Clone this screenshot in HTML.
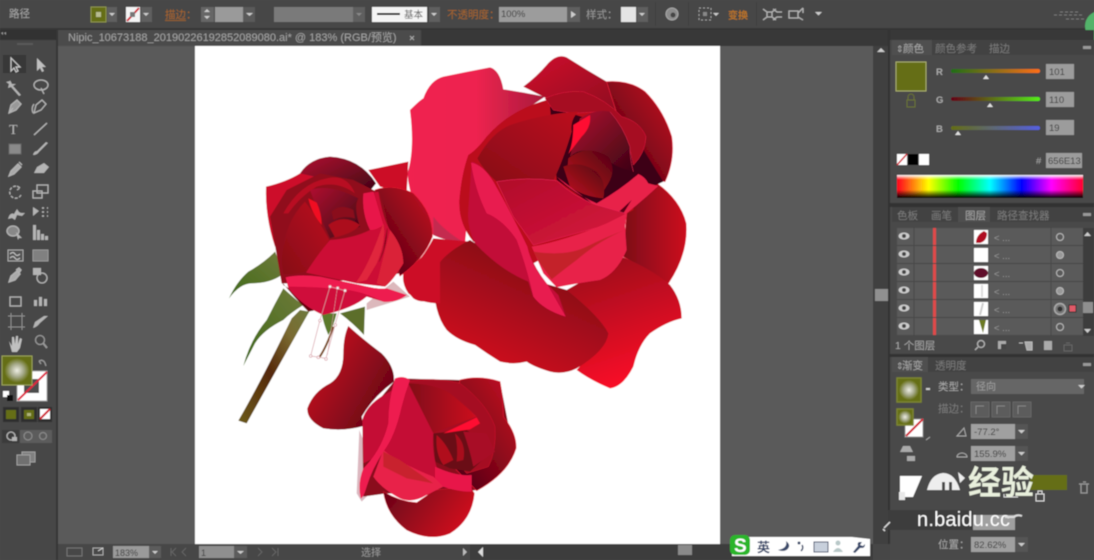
<!DOCTYPE html>
<html lang="zh">
<head>
<meta charset="utf-8">
<title>Illustrator</title>
<style>
html,body{margin:0;padding:0;background:#4a4a4a;width:1094px;height:560px;overflow:hidden}
svg{display:block;position:absolute;left:0;top:0}
text{font-family:"Liberation Sans","Noto Sans CJK SC",sans-serif}
.u{fill:#a8a8a8;font-size:10.5px}
.o{fill:#a9652a;font-size:10.5px}
.d{fill:#7c7c7c;font-size:10.5px}
.n{fill:#3a3a3a;font-size:9.5px}
.i{fill:none;stroke:#b4b4b4;stroke-width:1.3}
.f{fill:#b4b4b4}
</style>
</head>
<body>
<svg width="1094" height="560" viewBox="0 0 1094 560" xmlns="http://www.w3.org/2000/svg">
<defs>
<filter id="b" x="0" y="0" width="100%" height="100%"><feGaussianBlur stdDeviation="0.6"/></filter>
<linearGradient id="g1" x1="0" y1="0" x2="1" y2="1"><stop offset="0" stop-color="#d00c2c"/><stop offset="1" stop-color="#8a0a20"/></linearGradient>
<linearGradient id="g2" x1="1" y1="0" x2="0" y2="1"><stop offset="0" stop-color="#c80c24"/><stop offset=".6" stop-color="#7a0618"/><stop offset="1" stop-color="#3e0414"/></linearGradient>
<linearGradient id="g3" x1="0" y1="0" x2="1" y2="0"><stop offset="0" stop-color="#7c0818"/><stop offset="1" stop-color="#cc1020"/></linearGradient>
<linearGradient id="g4" x1=".3" y1="0" x2=".6" y2="1"><stop offset="0" stop-color="#9c0a1c"/><stop offset="1" stop-color="#ff1028"/></linearGradient>
<linearGradient id="g5" x1="0" y1="0" x2="1" y2="0"><stop offset="0" stop-color="#f0244f"/><stop offset=".5" stop-color="#ee234f"/><stop offset="1" stop-color="#a81c3c"/></linearGradient>
<linearGradient id="g6" x1=".8" y1="0" x2=".2" y2="1"><stop offset="0" stop-color="#720616"/><stop offset="1" stop-color="#d8101f"/></linearGradient>
<linearGradient id="g7" x1="1" y1="0" x2="0" y2="1"><stop offset="0" stop-color="#bc0e1e"/><stop offset="1" stop-color="#860818"/></linearGradient>
<linearGradient id="g8" x1="0" y1="0" x2="1" y2="1"><stop offset="0" stop-color="#b01030"/><stop offset="1" stop-color="#3c0414"/></linearGradient>
<linearGradient id="g9" x1="0" y1="0" x2="1" y2="1"><stop offset="0" stop-color="#b00a2a"/><stop offset="1" stop-color="#d8183e"/></linearGradient>
<linearGradient id="g10" x1="0" y1="0" x2="1" y2=".7"><stop offset="0" stop-color="#dc0f25"/><stop offset="1" stop-color="#640516"/></linearGradient>
<linearGradient id="g11" x1="0" y1="0" x2="1" y2=".4"><stop offset="0" stop-color="#640418"/><stop offset="1" stop-color="#cc1020"/></linearGradient>
<linearGradient id="g12" x1="1" y1="0" x2="0" y2="1"><stop offset="0" stop-color="#500514"/><stop offset="1" stop-color="#c80c1e"/></linearGradient>
<linearGradient id="st" x1="1" y1="0" x2="0" y2="1"><stop offset="0" stop-color="#6e7a3e"/><stop offset=".25" stop-color="#7a6a30"/><stop offset=".55" stop-color="#55280a"/><stop offset="1" stop-color="#6b5a1a"/></linearGradient>
<linearGradient id="lf" x1="1" y1="0" x2="0" y2="1"><stop offset="0" stop-color="#6f7a3a"/><stop offset="1" stop-color="#3f6a18"/></linearGradient>
<radialGradient id="rg"><stop offset="0" stop-color="#eeeee4"/><stop offset=".45" stop-color="#a5a98a"/><stop offset=".85" stop-color="#656e13"/><stop offset="1" stop-color="#656e13"/></radialGradient>
<linearGradient id="spec" x1="0" y1="0" x2="1" y2="0"><stop offset="0" stop-color="#ff0020"/><stop offset=".17" stop-color="#ffff00"/><stop offset=".33" stop-color="#00ff00"/><stop offset=".5" stop-color="#00ffff"/><stop offset=".67" stop-color="#0000ff"/><stop offset=".83" stop-color="#ff00ff"/><stop offset="1" stop-color="#ff0030"/></linearGradient>
<linearGradient id="wb" x1="0" y1="0" x2="0" y2="1"><stop offset="0" stop-color="#fff"/><stop offset=".2" stop-color="#fff" stop-opacity="0"/><stop offset=".65" stop-color="#000" stop-opacity="0"/><stop offset="1" stop-color="#000"/></linearGradient>
<linearGradient id="sR" x1="0" y1="0" x2="1" y2="0"><stop offset="0" stop-color="#1f6e13"/><stop offset="1" stop-color="#ff6e13"/></linearGradient>
<linearGradient id="sG" x1="0" y1="0" x2="1" y2="0"><stop offset="0" stop-color="#650013"/><stop offset="1" stop-color="#55ee13"/></linearGradient>
<linearGradient id="sB" x1="0" y1="0" x2="1" y2="0"><stop offset="0" stop-color="#656e13"/><stop offset="1" stop-color="#5560e0"/></linearGradient>
</defs>

<g filter="url(#b)">
<!-- backgrounds -->
<rect width="1094" height="560" fill="#4a4a4a"/>
<rect x="58" y="46" width="832" height="498" fill="#5a5a5a"/>
<rect x="0" y="0" width="1094" height="28" fill="#474747"/>
<rect x="0" y="28" width="1094" height="2" fill="#363636"/>
<rect x="0" y="30" width="890" height="16" fill="#373737"/>
<rect x="58" y="30" width="363" height="16" fill="#4b4b4b"/>
<rect x="0" y="30" width="56" height="10" fill="#333"/>
<rect x="0" y="40" width="56" height="520" fill="#464646"/>
<rect x="56" y="30" width="2" height="530" fill="#363636"/>
<rect x="195" y="46" width="525" height="498" fill="#fff"/>

<!-- top bar -->
<text x="9" y="17" class="u">路径</text>
<rect x="91" y="7" width="15" height="15" fill="#656e13" stroke="#8f9550"/>
<rect x="96" y="12" width="5" height="5" fill="#b8bc90"/>
<rect x="107" y="7" width="10" height="15" fill="#5e5e5e"/><path d="M109 13h6l-3 3z" fill="#ccc"/>
<rect x="126" y="7" width="14" height="15" fill="#f4f4f4"/><path d="M127 21L139 8" stroke="#d02030" stroke-width="2"/><rect x="130" y="12" width="5" height="5" fill="#777"/>
<rect x="141" y="7" width="11" height="15" fill="#5e5e5e"/><path d="M143 13h6l-3 3z" fill="#ccc"/>
<text x="165" y="18" class="o">描边：</text><rect x="165" y="20" width="21" height="1" fill="#96602a"/>
<rect x="201" y="7" width="13" height="15" fill="#666"/><path d="M204 12l3-3 3 3zM204 16l3 3 3-3z" fill="#ccc"/>
<rect x="215" y="7" width="28" height="15" fill="#9a9a9a"/>
<rect x="243" y="7" width="12" height="15" fill="#5a5a5a"/><path d="M246 13h7l-3.500 3z" fill="#ccc"/>
<rect x="274" y="7" width="79" height="15" fill="#7a7a7a"/>
<rect x="353" y="7" width="12" height="15" fill="#5e5e5e"/><path d="M356 13h6l-3 3z" fill="#888"/>
<rect x="372" y="7" width="55" height="15" fill="#f4f4f4"/><rect x="377" y="13" width="23" height="2" fill="#111"/><text x="404" y="18" class="n" style="fill:#555">基本</text>
<rect x="429" y="7" width="11" height="15" fill="#5e5e5e"/><path d="M431 13h6l-3 3z" fill="#ccc"/>
<text x="447" y="18" class="o">不透明度：</text>
<rect x="499" y="7" width="68" height="15" fill="#9c9c9c"/><text x="501" y="17" class="n">100%</text>
<rect x="567" y="7" width="13" height="15" fill="#5e5e5e"/><path d="M571 11l5 3.500-5 3.500z" fill="#ccc"/>
<text x="586" y="18" class="d" style="fill:#999">样式：</text>
<rect x="621" y="7" width="15" height="15" fill="#e4e4e4"/>
<rect x="637" y="7" width="11" height="15" fill="#5e5e5e"/><path d="M639 13h6l-3 3z" fill="#ccc"/>
<rect x="655" y="2" width="1" height="24" fill="#3e3e3e"/>
<circle cx="672" cy="14" r="6" fill="#8c8c8c" stroke="#aaa"/><circle cx="673" cy="15" r="2.500" fill="#444"/>
<rect x="688" y="2" width="1" height="24" fill="#3e3e3e"/>
<rect x="699" y="8" width="12" height="12" fill="none" stroke="#a0a0a0" stroke-dasharray="2 2"/><rect x="703" y="12" width="4" height="4" fill="#888"/><path d="M713 13h6l-3 3z" fill="#ccc"/>
<text x="738" y="19" text-anchor="middle" class="o" style="font-size:10px;fill:#b87228;font-weight:bold">变换</text>
<rect x="756" y="2" width="1" height="24" fill="#3e3e3e"/>
<path d="M773 9l4 3h5M773 20l4-3h5M763 9l4 3h5l4-3M763 20l4-3h5l4 3M767 12v5M772 12v5" class="i"/>
<path d="M789 11h9v7h-9zM798 13l5-5M803 8v5M798 17l5 3" class="i"/><path d="M815 12h7l-3.500 3.500z" fill="#ccc"/>
<path d="M1054 15h30M1060 12h20M1066 19h18" stroke="#8a8a8a" stroke-dasharray="3 2" stroke-width=".8"/>
<circle cx="1100" cy="26" r="15" fill="#52b36a"/>

<!-- tab -->
<text x="68" y="41" style="fill:#a4a4a4;font-size:11px">Nipic_10673188_20190226192852089080.ai* @ 183% (RGB/预览)</text>
<path d="M410 36l4 4M414 36l-4 4" stroke="#aaa"/>
<path d="M1 33l2-1v3zM4 33l2-1v3z" fill="#999"/>
<rect x="17" y="43" width="16" height="2" fill="#5a5a5a"/>

<!-- left tools -->
<rect x="3" y="55" width="23" height="18" fill="#383838"/>
<path d="M11 58l0 13 3-3 2 4 2-1-2-4 4 0z" fill="none" stroke="#c8c8c8" stroke-width="1.200"/>
<path d="M37 58v13l3-3 2 4 2-1-2-4h4z" fill="#c0c0c0"/>
<path d="M10 80l2 4 4 0-3 2 8 9-2 1-8-9-3 1 1-4-3-2 4-1z" class="f"/>
<path d="M34 85a7 5 0 1 1 14 0a7 5 0 1 1-14 0M41 88l3 6" class="i"/>
<path d="M9 113l2-8 6-5 4 4-5 6zM13 108l-4 5" class="i" style="fill:#999"/>
<path d="M34 113l2-8 6-5 4 4-5 6zM34 104q-3 4 -1 9" class="i"/>
<text x="9" y="134" style="fill:#b8b8b8;font-size:14px;font-family:'Liberation Serif',serif">T</text>
<path d="M34 135l13-12" stroke="#b4b4b4" stroke-width="1.400"/>
<rect x="9" y="144" width="12" height="10" fill="#8a8a8a" stroke="#666"/>
<path d="M33 155q4 0 6-3l9-9-2-1-9 9q-3 0-4 4z" class="f"/>
<path d="M9 176l2-5 7-7 3 3-7 7zM19 162l3 3" class="i" style="fill:#aaa"/>
<path d="M34 173l3-6 7-4 5 4-5 6z" class="f"/>
<path d="M20 188a6 6 0 1 0 1 7M17 186l3 2-3 2" class="i" stroke-dasharray="3 1.500"/>
<rect x="37" y="185" width="11" height="8" class="i"/><rect x="33" y="191" width="9" height="7" class="i"/>
<path d="M8 219q2-7 6-5l3-5 2 3 2 1 4 0-3 3-5-1-2 5-3-2z" class="f"/>
<path d="M33 207l6 4-6 5z" class="f"/><path d="M42 208h2M47 208h1M42 212h2M47 212h1M42 216h2M47 216h1" stroke="#bbb" stroke-width="1.500"/>
<ellipse cx="13" cy="231" rx="6" ry="5" class="i" style="fill:#888"/><path d="M16 232l6 6-3 0-1 2z" class="f"/>
<path d="M33 225h3v15h-3zM37 230h3v10h-3zM41 234h3v6h-3zM45 236h3v4h-3z" class="f"/>
<rect x="8" y="250" width="15" height="11" fill="#555" stroke="#aaa"/><path d="M10 254q3-3 5 0t5 0M10 258q3-3 5 0t5 0" stroke="#ccc" fill="none"/>
<rect x="33" y="250" width="15" height="11" fill="#808080" stroke="#999"/>
<path d="M9 282l2-6 6-5 3 3-5 6zM16 270l3-2 2 2-2 3" class="i" style="fill:#aaa"/>
<rect x="33" y="268" width="8" height="7" class="f"/><circle cx="42" cy="278" r="5" class="i"/>
<rect x="10" y="297" width="11" height="9" class="i"/>
<path d="M34 306v-6h3v6zM39 306v-9h3v9zM44 306v-7h3v7z" class="f"/>
<path d="M11 316h11v11h-11zM8 316h17M8 327h17M11 313v17M22 313v17" stroke="#8e8e8e" fill="none"/>
<path d="M33 328q4-1 7-5l8-7-4 0-9 6z" class="f"/>
<path d="M9 341l3 5 0-9 2 0 1 7 1-8 2 0 0 8 2-6 2 1-2 9-3 4h-5z" fill="#c0c0c0"/>
<circle cx="40" cy="340" r="4.500" class="i" style="stroke:#999"/><path d="M43 343l4 5" stroke="#999" stroke-width="2"/>

<rect x="17" y="371" width="30" height="30" fill="#fff" stroke="#999"/>
<rect x="24" y="379" width="15" height="14" fill="#4d4d4d"/>
<path d="M18 400L47 372" stroke="#e02840" stroke-width="2"/>
<rect x="2" y="356" width="30" height="29" fill="url(#rg)" stroke="#9ca45a"/>
<path d="M39 361q4-2 6 2l1 3M39 361l3-1M39 361l2 3" class="i" style="stroke:#999"/>
<rect x="3" y="391" width="6" height="6" fill="#fff"/><rect x="7" y="395" width="6" height="6" fill="#111"/>
<rect x="3" y="407" width="16" height="15" fill="#2e2e2e"/><rect x="6" y="410" width="10" height="9" fill="#656e13"/>
<rect x="21" y="407" width="16" height="15" fill="#2e2e2e"/><rect x="24" y="410" width="10" height="9" fill="#656e13"/><rect x="27" y="413" width="4" height="3" fill="#b0b47a"/>
<rect x="38" y="407" width="14" height="15" fill="#2e2e2e"/><rect x="40" y="409" width="10" height="10" fill="#fff"/><path d="M40 419l10-10" stroke="#d02030" stroke-width="2"/>
<rect x="2" y="430" width="17" height="13" fill="#3a3a3a"/><rect x="20" y="430" width="32" height="13" fill="#5c5c5c"/>
<circle cx="11" cy="436" r="4" class="i"/><rect x="12" y="437" width="5" height="4" class="f"/>
<circle cx="28" cy="436" r="4" class="i" style="stroke:#888"/><circle cx="43" cy="436" r="3.500" class="i" style="stroke:#888"/>
<rect x="22" y="452" width="13" height="10" fill="#808080" stroke="#a0a0a0"/><rect x="17" y="455" width="13" height="10" fill="#707070" stroke="#a0a0a0"/>

<!-- big rose -->
<g transform="translate(400 50) scale(.33333)">
<path d="M370 110Q410 80 440 45Q470 10 500 22Q560 60 620 95Q650 130 665 195L560 200L440 145Z" fill="url(#g1)"/>
<path d="M620 95Q690 90 735 125Q790 180 815 260Q825 330 795 395L700 370L650 190Z" fill="url(#g2)" stroke="#e8203c" stroke-width="2"/>
<path d="M770 400Q840 450 858 520Q865 610 805 700L670 620L680 490Z" fill="url(#g3)" stroke="#e01a30" stroke-width="2"/>
<path d="M500 720L670 622Q760 660 810 705Q845 750 845 805Q800 815 750 850Q715 885 700 950Q670 1010 630 1015Q570 990 530 960L600 880Z" fill="url(#g4)"/>
<path d="M30 180Q60 150 70 145Q90 90 130 80Q200 65 270 52Q300 60 310 118Q360 125 435 140L330 210L220 320L195 580Q130 570 100 555Q30 470 22 370Q45 300 30 180Z" fill="url(#g5)"/>
<path d="M100 500Q130 540 195 580Q130 570 100 555Z" fill="#c42a50"/>
<path d="M10 680Q60 640 100 565L210 575L100 750Q60 760 40 745Q15 720 10 680Z" fill="#cc0f28"/>
<path d="M100 680Q110 620 210 570L400 690L500 720Q600 800 625 850Q620 900 530 955Q490 975 450 965Q400 950 380 935Q340 945 300 935Q260 910 225 885Q170 870 140 840Q100 790 100 680Z" fill="url(#g6)"/>
<path d="M205 315Q230 300 260 260Q330 180 440 150L560 170L700 350L700 480L400 640L220 575Q175 520 178 450Q185 370 205 315Z" fill="#bb0a1a"/>
<path d="M450 170L700 250L790 395L600 480L470 390Z" fill="#3e0514"/>
<path d="M435 145Q490 120 550 125Q620 150 665 200Q720 215 738 260Q735 310 700 345Q690 280 660 230Q640 195 600 185L520 190L460 180Z" fill="#a60a20" stroke="#e02040" stroke-width="1.500"/>
<path d="M540 205Q590 175 630 185Q670 230 690 290Q690 330 700 365Q640 350 590 310Q540 290 510 320Z" fill="url(#g8)"/>
<path d="M630 185Q670 230 690 290Q690 330 700 365" fill="none" stroke="#e02a50" stroke-width="1.500"/>
<path d="M505 325Q560 280 625 320Q650 360 625 400L600 440L500 380Z" fill="url(#g12)"/>
<path d="M490 350Q540 330 590 365Q620 395 610 445Q550 440 510 410Z" fill="url(#g12)"/>
<path d="M232 325Q280 240 340 222Q440 190 535 185Q510 210 515 245Q490 330 460 392Q380 380 290 395Q250 360 232 325Z" fill="url(#g7)"/>
<path d="M570 195Q575 230 545 260L505 312Q520 280 520 225Z" fill="#ff1030"/>
<path d="M470 380Q520 430 590 460Q660 420 715 372Q735 380 745 400L775 408Q730 450 680 490L640 515L590 470Z" fill="#e8204a"/>
<path d="M630 510L695 450L670 490Z" fill="#5a0514"/>
<path d="M290 395Q380 380 470 392Q520 440 590 465L650 482L680 492Q640 510 620 525L400 585Q370 540 340 500Z" fill="url(#g9)" stroke="#f0285a" stroke-width="1.500"/>
<path d="M395 590Q500 570 620 520L680 490L675 530L680 600Q650 670 600 690Q530 700 470 712L430 670Z" fill="#e8234a"/>
<path d="M400 605Q500 620 560 590Q620 560 675 540Q600 570 530 630Q490 660 455 688L420 640Z" fill="#c4202c"/>
<path d="M205 480L215 335Q250 345 280 395Q340 500 380 590Q400 650 440 700L475 735L497 800Q430 780 400 740L385 695Q300 660 225 580Q200 530 205 480Z" fill="#c20838"/>
<path d="M213 338Q250 345 280 395Q340 500 382 590Q395 650 440 700L497 800Q430 780 400 740Q380 650 350 570Q310 510 260 490Q225 420 213 338Z" fill="#e81a50"/>
</g>

<!-- small rose and stem -->
<g transform="translate(220 150) scale(.33333)">
<path d="M215 505L240 480L268 485Q225 560 80 820L55 812Q120 700 215 505Z" fill="url(#st)"/>
<path d="M190 415Q240 460 250 465Q210 490 190 510Q130 540 105 580L70 648Q90 570 140 510Q165 460 190 415Z" fill="url(#lf)"/>
<path d="M165 305Q185 350 185 375Q150 400 95 400Q60 400 27 445Q50 395 85 365Q130 340 165 305Z" fill="url(#lf)"/>
<path d="M360 490L435 470L432 555Q400 520 360 490Z" fill="#5c6e2c"/>
<path d="M305 490L350 490Q340 530 325 555Q310 520 305 490Z" fill="#5c7a2c"/>
<path d="M445 60L565 35L560 130L480 110Z" fill="#cc1025"/>
<path d="M520 395L570 440L440 480L440 460Z" fill="#dcb8bc"/>
<path d="M550 370L640 290L660 300L660 460Q600 460 565 430Q545 400 550 370Z" fill="#cc0f28"/>
<path d="M138 110Q200 95 240 70Q300 65 330 90Q250 100 200 170Q175 240 165 290Q135 200 138 110Z" fill="#cd0f2c"/>
<path d="M240 70Q270 25 330 20Q420 25 468 100L440 135L330 90Z" fill="url(#g8)"/>
<path d="M465 120Q520 100 580 130Q640 190 637 260Q610 330 540 378L480 220Z" fill="url(#g2)" stroke="#e01a30" stroke-width="2"/>
<path d="M150 200L200 120L300 70L400 90L480 130L540 370L300 400L185 400Z" fill="#900a1c"/>
<path d="M190 190Q240 100 320 85Q380 70 405 130Q350 90 290 110Q240 140 205 190Z" fill="#b80c22"/>
<path d="M270 120Q330 100 415 145Q400 170 420 230L330 265L300 200Z" fill="url(#g8)"/>
<path d="M335 185Q360 160 400 180L405 205Q370 195 340 210Z" fill="#8a0a1a"/>
<path d="M325 225Q370 190 420 225Q400 250 345 262Z" fill="#ac0a1c"/>
<path d="M185 335Q190 220 255 155Q290 200 328 270Q290 320 260 365Q220 375 190 372Z" fill="url(#g7)"/>
<path d="M265 145L290 158Q305 190 305 225Q275 190 265 145Z" fill="#f01020"/>
<path d="M258 368Q295 310 330 270Q400 265 450 240Q460 200 440 130L475 125Q490 210 510 240Q550 290 550 340Q520 390 495 410L410 400Z" fill="#cc1035"/>
<path d="M430 130L460 125L490 225Q470 240 450 240Q425 190 430 130Z" fill="#e81848"/>
<path d="M408 398Q450 340 490 220Q500 270 470 340L440 390Z" fill="#e0283c"/>
<path d="M470 400Q500 280 510 240Q550 290 550 340Q520 390 495 410Z" fill="#da2038"/>
<path d="M502 235L490 300L478 335Q500 290 502 235Z" fill="#7a0615" stroke="#7a0615"/>
<path d="M190 405Q250 440 290 480L265 485Q220 440 185 395Z" fill="#6a0410"/>
<path d="M197 382Q240 372 300 380Q370 395 420 405Q480 420 500 415L560 435Q530 458 490 455L440 440Q400 475 310 495Q250 470 205 415Z" fill="#cf0a3a"/>
<path d="M197 382Q240 372 300 380Q370 395 420 405Q480 420 500 415L560 435Q530 458 490 455Q430 425 380 420Q300 410 205 410Z" fill="#ee1a50"/>
<path d="M340 530Q320 590 298 622" stroke="#7a4a1a" stroke-width="6" fill="none"/>
<path d="M330 410L375 422L345 525L318 625L272 618L300 510Z" fill="none" stroke="#d9a0a8" stroke-width="2"/>
<path d="M352 414L322 615" fill="none" stroke="#d9a0a8" stroke-width="1.500"/>
<g fill="#fff" stroke="#d9a0a8" stroke-width="2"><circle cx="330" cy="410" r="4"/><circle cx="353" cy="414" r="4"/><circle cx="375" cy="422" r="4"/><circle cx="272" cy="618" r="4"/><circle cx="295" cy="622" r="4"/><circle cx="318" cy="627" r="4"/><circle cx="300" cy="512" r="4"/><circle cx="346" cy="525" r="4"/></g>
</g>

<!-- third rose -->
<g transform="translate(300 320) scale(.33333)">
<path d="M178 330L170 520L185 545L240 490Z" fill="#dcb8c0"/>
<path d="M145 18Q185 55 245 100Q285 140 282 185Q220 230 185 290L190 318Q130 335 70 325Q20 300 22 265Q40 215 90 190Q130 165 130 100Q130 50 145 18Z" fill="url(#g10)"/>
<path d="M187 300L290 175L480 180L600 185L640 390L530 510L400 525L260 520L190 530Z" fill="#8a0a1c"/>
<path d="M480 180Q540 165 600 185Q610 240 610 290Q650 340 648 385Q625 460 530 512L440 420Z" fill="url(#g2)" stroke="#e01a30" stroke-width="2"/>
<path d="M250 515Q300 545 350 548L405 510L510 500L523 520Q515 600 450 640Q390 665 320 630Q260 585 250 515Z" fill="url(#g11)" stroke="#e01a30" stroke-width="1.500"/>
<path d="M320 185Q400 170 480 190Q560 250 585 320Q590 390 565 440L500 460L400 340Z" fill="#a50c20" stroke="#d01a30" stroke-width="1.500"/>
<path d="M400 340L500 330L580 390L510 455L450 445L405 425Z" fill="#6a0818"/>
<path d="M410 345Q440 370 460 420L430 435Q405 400 410 345Z" fill="#b00c1e"/>
<path d="M465 340Q500 370 490 420L470 425Q475 380 465 340Z" fill="#a80c1e"/>
<path d="M490 335L560 340L585 395L520 440Q510 390 490 335Z" fill="#a81028"/>
<path d="M320 190Q400 190 450 220Q500 260 530 290Q450 320 395 340Q350 290 315 240Z" fill="url(#g3)"/>
<path d="M530 292L540 310L510 328Q460 335 430 340Z" fill="#ff1030"/>
<path d="M187 300Q200 250 270 215L325 190L400 340Q395 410 420 470L400 490L250 400L190 430Z" fill="#c40c34"/>
<path d="M405 440Q470 470 515 465L515 515Q460 515 405 490Z" fill="#e81848"/>
<path d="M250 390Q300 430 400 470L430 500L380 525Q330 555 290 530Q240 500 220 470Z" fill="#e8234a"/>
<path d="M250 395L300 420L400 490L320 475Q270 450 250 440Z" fill="#c8202e"/>
<path d="M285 175Q310 165 330 180Q315 220 305 260Q285 350 250 395Q215 450 200 500Q190 535 182 535Q172 490 190 445Q245 390 265 310Q265 240 285 175Z" fill="#ee1a50"/>
</g>

<!-- color panel -->
<rect x="890" y="30" width="204" height="530" fill="#4a4a4a"/>
<rect x="888" y="30" width="2" height="530" fill="#333"/>
<rect x="890" y="30" width="204" height="10" fill="#393939"/>
<rect x="892" y="40" width="202" height="15" fill="#424242"/>
<rect x="892" y="40" width="40" height="15" fill="#4f4f4f"/>
<text x="896" y="52" style="fill:#aaa;font-size:9px">⇕</text>
<text x="903" y="52" class="u">颜色</text><text x="935" y="52" class="d">颜色参考</text><text x="989" y="52" class="d">描边</text>
<rect x="1083" y="46" width="8" height="3" fill="#999"/>
<rect x="896" y="62" width="30" height="29" fill="#656e13" stroke="#a9ad70"/>
<rect x="907" y="100" width="8" height="7" fill="none" stroke="#6b7330"/><path d="M908 100v-3a3 3 0 0 1 6 0v3" fill="none" stroke="#6b7330"/>
<text x="936" y="75" class="u" style="font-size:9.500px;font-weight:bold">R</text><text x="936" y="103" class="u" style="font-size:9.500px;font-weight:bold">G</text><text x="936" y="132" class="u" style="font-size:9.500px;font-weight:bold">B</text>
<rect x="951" y="69" width="89" height="4" rx="2" fill="url(#sR)"/><rect x="951" y="97" width="89" height="4" rx="2" fill="url(#sG)"/><rect x="951" y="126" width="89" height="4" rx="2" fill="url(#sB)"/>
<path d="M983 79l3-4 3 4z" fill="#e0e0e0"/><path d="M987 107l3-4 3 4z" fill="#e0e0e0"/><path d="M955 135l3-4 3 4z" fill="#e0e0e0"/>
<rect x="1046" y="64" width="28" height="15" fill="#9c9c9c"/><text x="1049" y="75" class="n">101</text>
<rect x="1046" y="92" width="28" height="15" fill="#9c9c9c"/><text x="1049" y="103" class="n">110</text>
<rect x="1046" y="120" width="28" height="15" fill="#9c9c9c"/><text x="1049" y="131" class="n">19</text>
<rect x="897" y="154" width="10" height="11" fill="#fff"/><path d="M897 165l10-11" stroke="#d02030" stroke-width="1.500"/>
<rect x="908" y="154" width="10" height="11" fill="#000"/><rect x="919" y="154" width="10" height="11" fill="#fff"/>
<text x="1036" y="164" class="u" style="font-size:9.500px">#</text>
<rect x="1046" y="153" width="36" height="15" fill="#9c9c9c"/><text x="1048" y="164" class="n">656E13</text>
<rect x="897" y="175" width="186" height="23" fill="url(#spec)"/><rect x="897" y="175" width="186" height="23" fill="url(#wb)"/>

<!-- layers panel -->
<rect x="890" y="203" width="204" height="4" fill="#333"/>
<rect x="892" y="207" width="202" height="15" fill="#424242"/>
<rect x="958" y="207" width="32" height="15" fill="#505050"/>
<text x="897" y="219" class="d">色板</text><text x="931" y="219" class="d">画笔</text><text x="965" y="219" class="u">图层</text><text x="997" y="219" class="d">路径查找器</text>
<rect x="1083" y="213" width="8" height="3" fill="#999"/>
<rect x="1083" y="228" width="11" height="108" fill="#3c3c3c"/>
<path d="M1084 236l3.500-4 3.500 4z" fill="#ccc"/>
<path d="M1084 329l3.500 4 3.500-4z" fill="#ccc"/>
<rect x="1083" y="302" width="10" height="11" fill="#8f8f8f"/>
<g fill="#5a5a5a">
<rect x="897" y="228" width="186" height="17"/><rect x="897" y="246" width="186" height="17"/><rect x="897" y="264" width="186" height="17"/><rect x="897" y="282" width="186" height="17"/><rect x="897" y="300" width="186" height="17"/><rect x="897" y="318" width="186" height="17"/>
</g>
<path d="M914 228v107M1051 228v107" stroke="#464646"/>
<rect x="933" y="228" width="3" height="107" fill="#e04848"/>
<path d="M897 245.500h186M897 263.500h186M897 281.500h186M897 299.500h186M897 317.500h186" stroke="#464646"/>
<g fill="#ccc"><ellipse cx="904" cy="236" rx="5.500" ry="3.500"/><ellipse cx="904" cy="254" rx="5.500" ry="3.500"/><ellipse cx="904" cy="272" rx="5.500" ry="3.500"/><ellipse cx="904" cy="290" rx="5.500" ry="3.500"/><ellipse cx="904" cy="308" rx="5.500" ry="3.500"/><ellipse cx="904" cy="326" rx="5.500" ry="3.500"/></g>
<g fill="#444"><circle cx="904" cy="236" r="2"/><circle cx="904" cy="254" r="2"/><circle cx="904" cy="272" r="2"/><circle cx="904" cy="290" r="2"/><circle cx="904" cy="308" r="2"/><circle cx="904" cy="326" r="2"/></g>
<g fill="#fff"><rect x="974" y="230" width="14" height="14"/><rect x="974" y="248" width="14" height="14"/><rect x="974" y="266" width="14" height="14"/><rect x="974" y="284" width="14" height="14"/><rect x="974" y="302" width="14" height="14"/><rect x="974" y="320" width="14" height="14"/></g>
<path d="M976 243q0-8 8-12l3 2q0 8-7 10z" fill="#b00c20"/>
<ellipse cx="981" cy="273" rx="7" ry="5" fill="#60082a"/>
<path d="M982 285v12" stroke="#ddd" stroke-width="2"/><path d="M983 303l-3 12" stroke="#ccc" stroke-width="2"/>
<path d="M979 320h7l-3 13z" fill="#6c7a20"/>
<text x="994" y="241" style="fill:#989898;font-size:9.500px">&lt; ...</text><text x="994" y="259" style="fill:#989898;font-size:9.500px">&lt; ...</text><text x="994" y="277" style="fill:#989898;font-size:9.500px">&lt; ...</text><text x="994" y="295" style="fill:#989898;font-size:9.500px">&lt; ...</text><text x="994" y="313" style="fill:#989898;font-size:9.500px">&lt; ...</text><text x="994" y="331" style="fill:#989898;font-size:9.500px">&lt; ...</text>
<g fill="none" stroke="#bbb"><circle cx="1060" cy="237" r="3.500"/><circle cx="1060" cy="255" r="3.500" fill="#999"/><circle cx="1060" cy="273" r="3.500"/><circle cx="1060" cy="291" r="3.500" fill="#999"/><circle cx="1060" cy="327" r="3.500"/></g>
<circle cx="1060" cy="309" r="5.500" fill="#777" stroke="#aaa" stroke-width="1.500"/><circle cx="1060" cy="309" r="2.500" fill="#333"/>
<rect x="1069" y="305" width="7" height="7" fill="#e05a68" stroke="#333"/>
<text x="895" y="349" class="u">1 个图层</text>
<circle cx="981" cy="344" r="3.500" class="i"/><path d="M978 347l-3 3" class="i"/>
<rect x="998" y="341" width="8" height="8" style="fill:#aaa"/><rect x="1001" y="344" width="5" height="5" fill="#444"/>
<path d="M1019 343h4M1025 342h7v8h-5z" stroke="#bbb" fill="#aaa"/>
<path d="M1044 341h8v9h-8z" fill="#aaa"/>
<path d="M1064 345h8v6h-8zM1066 343h4" fill="none" stroke="#666"/>

<!-- gradient panel -->
<rect x="890" y="354" width="204" height="3" fill="#333"/>
<rect x="892" y="357" width="202" height="15" fill="#424242"/>
<rect x="892" y="357" width="36" height="15" fill="#505050"/>
<text x="896" y="369" style="fill:#aaa;font-size:9px">⇕</text>
<text x="902" y="369" class="u">渐变</text><text x="935" y="369" class="d">透明度</text>
<rect x="1083" y="363" width="8" height="3" fill="#999"/>
<rect x="897" y="378" width="24" height="24" fill="url(#rg)" stroke="#7c8430" stroke-width="1.500"/>
<rect x="926" y="388" width="4" height="2" fill="#ccc"/>
<text x="938" y="390" class="u">类型：</text>
<rect x="971" y="379" width="113" height="15" fill="#666"/><text x="976" y="390" style="fill:#a0a0a0;font-size:10px">径向</text>
<path d="M1078 385h7l-3.500 3.500z" fill="#ccc"/>
<text x="938" y="412" class="d">描边：</text>
<rect x="971" y="402" width="18" height="15" fill="#5c5c5c" stroke="#666"/><rect x="992" y="402" width="18" height="15" fill="#5c5c5c" stroke="#666"/><rect x="1013" y="402" width="18" height="15" fill="#5c5c5c" stroke="#666"/>
<path d="M976 414v-8h8M997 414v-8h8M1018 414v-8h8" stroke="#888" fill="none"/>
<rect x="905" y="419" width="18" height="18" fill="#fff" stroke="#888"/><path d="M906 436l17-17" stroke="#d02030" stroke-width="2"/>
<rect x="897" y="409" width="16" height="16" fill="url(#rg)" stroke="#7c8430" stroke-width="1.500"/>
<path d="M926 440l4-3" stroke="#aaa"/>
<path d="M957 436l7-8 2 8h-9z" fill="none" stroke="#aaa"/>
<rect x="971" y="424" width="44" height="15" fill="#a0a0a0"/><text x="974" y="435" class="n">-77.2°</text>
<rect x="1015" y="424" width="13" height="15" fill="#555"/><path d="M1018 430h7l-3.500 3.500z" fill="#ccc"/>
<path d="M957 457a5 4 0 0 1 10 0z" fill="none" stroke="#aaa"/>
<rect x="971" y="446" width="44" height="15" fill="#a0a0a0"/><text x="974" y="457" class="n">155.9%</text>
<rect x="1015" y="446" width="13" height="15" fill="#555"/><path d="M1018 452h7l-3.500 3.500z" fill="#ccc"/>
<path d="M903 446h7l3 6h-13zM907 456h8v5h-8z" fill="#aaa"/>
<rect x="1030" y="475" width="37" height="15" fill="#656e13"/>
<path d="M1079 484h10M1081 484v9h6v-9M1083 482h3" fill="none" stroke="#999" stroke-width="1.300"/>
<path d="M1018 497h-14v-3M1036 494v7h8v-7zM1038 494v-3h4v3" fill="none" stroke="#ddd" stroke-width="1"/>
<rect x="971" y="515" width="44" height="15" fill="#a0a0a0"/>
<rect x="885" y="510" width="88" height="20" fill="#3c3c3c"/>
<rect x="973" y="510" width="37" height="5" fill="#4a4a4a"/>
<text x="938" y="548" class="u">位置：</text>
<rect x="971" y="537" width="44" height="15" fill="#a0a0a0"/><text x="974" y="548" class="n">82.62%</text>
<rect x="1015" y="537" width="13" height="15" fill="#555"/><path d="M1018 543h7l-3.500 3.500z" fill="#ccc"/>

<!-- watermark -->
<path d="M900 476h22l-9 21h-13z" fill="#fff"/>
<rect x="899" y="492" width="6" height="8" fill="#e8e8e8"/>
<path d="M927 490q4-16 16-17q12 0 17 17h-8v-8h-3v8h-4v-8h-3v8z" fill="#eee"/>
<path d="M958 472l7 6-5 5z" fill="#eee"/>
<text x="968" y="494" style="fill:#e8efdc;font-size:33px;font-weight:bold;font-family:'Noto Sans CJK SC',sans-serif">经验</text>
<text x="917" y="526" style="fill:#fff;font-size:20px;letter-spacing:.2px">n.baidu.cc</text>
<path d="M1005 517h9q3-3 8-1" stroke="#ddd" stroke-width="2" fill="none"/>

<!-- scrollbars / status -->
<rect x="873" y="46" width="15" height="498" fill="#404040"/>
<rect x="875" y="289" width="13" height="12" fill="#909090"/>
<path d="M877 52l4-4 4 4z" fill="#ccc"/>
<path d="M884 528l6-6M883 529l2 2" stroke="#ddd" stroke-width="1.500"/>
<rect x="58" y="544" width="832" height="16" fill="#474747"/>
<rect x="470" y="544" width="403" height="16" fill="#3d3d3d"/>
<rect x="678" y="545" width="14" height="10" fill="#8a8a8a"/>
<rect x="67" y="548" width="15" height="8" fill="none" stroke="#777"/><rect x="93" y="548" width="10" height="7" fill="none" stroke="#aaa"/><path d="M98 551l5-3" stroke="#ddd"/>
<rect x="113" y="546" width="36" height="12" fill="#9a9a9a"/><text x="115" y="556" class="n" style="font-size:9px">183%</text>
<rect x="149" y="546" width="12" height="12" fill="#5c5c5c"/><path d="M152 551h6l-3 3z" fill="#ccc"/>
<path d="M171 548v8M176 548l-4 4 4 4M186 548l-4 4 4 4" stroke="#666" fill="none"/>
<rect x="199" y="546" width="35" height="12" fill="#8f8f8f"/><text x="201" y="556" class="n" style="font-size:9px">1</text>
<rect x="234" y="546" width="13" height="12" fill="#5c5c5c"/><path d="M237 551h7l-3.500 3z" fill="#ccc"/>
<path d="M258 548l4 4-4 4M272 548l4 4-4 4M278 548v8" stroke="#666" fill="none"/>
<text x="361" y="556" style="fill:#999;font-size:10px">选择</text>
<path d="M463 548l4 4-4 4z" fill="#bbb"/>
<path d="M483 547l-5 5 5 5z" fill="#ddd"/>

<!-- IME bar -->
<path d="M732 537h120l18 2v17h-138z" fill="#fff"/>
<rect x="730" y="535" width="20" height="20" rx="5" fill="#2bb52b"/>
<text x="734" y="552" style="fill:#fff;font-size:19px;font-weight:bold">S</text>
<text x="757" y="552" style="fill:#3a4a6a;font-size:13px;font-weight:bold">英</text>
<path d="M786 541q2 7-8 9q8 3 11-3q1-3-3-6z" fill="#3a4a6a"/>
<circle cx="799" cy="543" r="1.500" fill="#3a4a6a"/><path d="M802 545q2 3-1 6" stroke="#3a4a6a" stroke-width="1.500" fill="none"/>
<rect x="814" y="542" width="14" height="10" fill="#c8d0dc" stroke="#3a4a6a"/>
<circle cx="838" cy="543" r="2.500" fill="#b8c8c8"/><path d="M833 552q5-8 10 0z" fill="#b8c8c8"/>
<path d="M853 552l5-6q-1-3 1-4l3 0-2 3 3 1 2-2q0 4-3 4l-2 0-5 5z" fill="#3a4a6a"/>
</g>
</svg>
</body>
</html>
